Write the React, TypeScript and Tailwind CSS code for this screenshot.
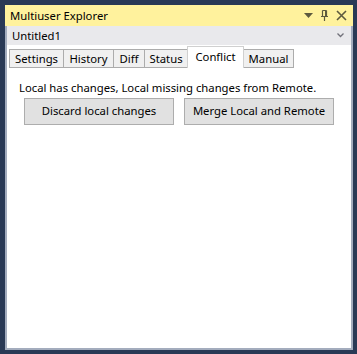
import React from "react";

const tabs = [
  { label: "Settings", w: "w-[55px]" },
  { label: "History", w: "w-[51px]" },
  { label: "Diff", w: "w-[32px]" },
  { label: "Status", w: "w-[44px]" },
  { label: "Conflict", w: "w-[57px]" },
  { label: "Manual", w: "w-[51px]" },
];

function TitleIcons() {
  return (
    <div className="flex items-center gap-[7px] text-[#5d5a3f]">
      <svg width="9" height="5" viewBox="0 0 9 5">
        <path d="M0 0h9L4.5 5z" fill="currentColor" />
      </svg>
      <svg width="9" height="11" viewBox="0 0 9 11">
        <path
          d="M2.5 0.5v6M6.5 0.5v6M2.5 0.5h4M1 6.5h7M4.5 6.5V11"
          stroke="currentColor"
          strokeWidth="1.2"
          fill="none"
        />
        <path d="M5 1h1.5v5.5H5z" fill="currentColor" />
      </svg>
      <svg width="11" height="11" viewBox="0 0 11 11">
        <path d="M1 1l9 9M10 1l-9 9" stroke="currentColor" strokeWidth="1.6" />
      </svg>
    </div>
  );
}

export default function App() {
  return (
    <div
      className="h-[354px] w-[357px] bg-[#293955] pt-[5px] pr-[4px] pb-[4px] pl-[5px] text-[11.3px] text-black"
      style={{ fontFamily: '"Segoe UI", "Noto Sans", "Open Sans", sans-serif' }}
    >
      <div className="flex h-full flex-col">
        <div className="flex h-[21px] items-center justify-between bg-[#fff29d] pl-[5px] pr-[6px]">
          <span className="leading-none">Multiuser Explorer</span>
          <TitleIcons />
        </div>
        <div className="flex flex-1 flex-col border-x-2 border-b-2 border-[#a3acbd] bg-white">
          <div className="flex h-[19px] items-center justify-between bg-[#e9e9ec] pl-[5px] pr-[7px]">
            <span className="leading-none">Untitled1</span>
            <svg width="7" height="5" viewBox="0 0 7 5" className="text-[#71717a]">
              <path d="M0.5 0.5l3 3 3-3" stroke="currentColor" strokeWidth="1.3" fill="none" />
            </svg>
          </div>
          <div className="flex h-[23px] items-end pl-[2px] pt-[1px]">
            {tabs.map((t) =>
              t.label === "Conflict" ? (
                <div
                  key={t.label}
                  className={`${t.w} z-10 -ml-[1px] flex h-[22px] items-center justify-center border-x border-t border-[#d0d0d0] bg-white pb-[2px] leading-none`}
                >
                  {t.label}
                </div>
              ) : (
                <div
                  key={t.label}
                  className={`${t.w} -ml-[1px] flex h-[19px] items-center justify-center border border-[#acacac] bg-[#f0f0f0] leading-none first:ml-0`}
                >
                  {t.label}
                </div>
              )
            )}
          </div>
          <div className="flex flex-col pl-[12px] pt-[14px]">
            <p className="leading-none">Local has changes, Local missing changes from Remote.</p>
            <div className="mt-[5px] flex gap-[10px] pl-[5px]">
              <button className="flex h-[27px] w-[150px] items-center justify-center border border-[#adadad] bg-[#e1e1e1]">
                Discard local changes
              </button>
              <button className="flex h-[27px] w-[150px] items-center justify-center border border-[#adadad] bg-[#e1e1e1]">
                Merge Local and Remote
              </button>
            </div>
          </div>
        </div>
      </div>
    </div>
  );
}
